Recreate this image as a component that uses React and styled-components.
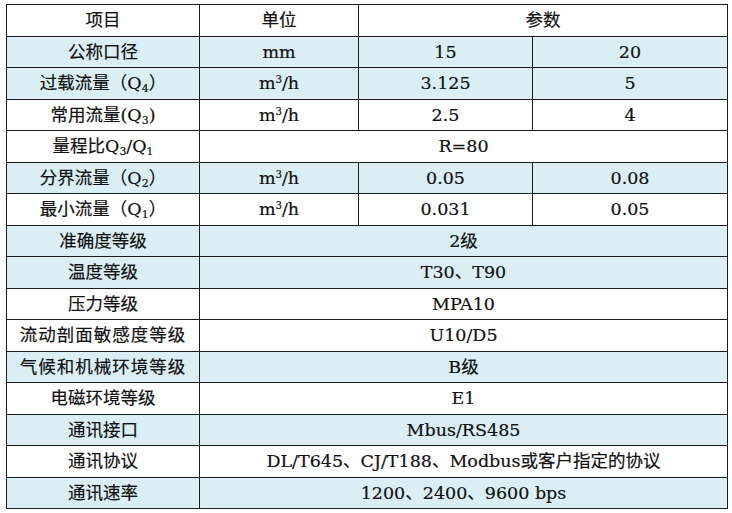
import React from 'react';
import styled, { createGlobalStyle } from 'styled-components';

const GlobalStyle = createGlobalStyle`
    html, body {
        margin: 0;
        padding: 0;
        background: #ffffff;
    }
`;

const Page = styled.div`
    padding: 4px 0 0 6px;
`;

const Table = styled.table`
    width: 721px;
    border-collapse: collapse;
    table-layout: fixed;
`;

const Row = styled.tr`
    height: 31.5px;
    background: ${(p) => (p.$shade ? '#daeef3' : '#ffffff')};
`;

const Cell = styled.td`
    border: 1px solid #1a1a1a;
    padding: 0 2px;
    text-align: center;
    vertical-align: middle;
    font-family: "DejaVu Serif", "Noto Sans CJK SC", serif;
    font-size: 17.5px;
    line-height: 20px;
    color: #111;
    -webkit-text-stroke: 0.2px #111;
    white-space: nowrap;
    letter-spacing: ${(p) => (p.$wide ? '1px' : '0')};
`;

const Sub = styled.sub`
    font-size: 0.62em;
    vertical-align: -0.25em;
    line-height: 0;
`;

const Sup = styled.sup`
    font-size: 0.58em;
    vertical-align: 0.6em;
    line-height: 0;
`;

const Unit = () => (
    <>
        m<Sup>3</Sup>/h
    </>
);

const rows = [
    { shade: true, label: '公称口径', unit: 'mm', values: ['15', '20'] },
    { shade: true, label: <>过载流量（Q<Sub>4</Sub>）</>, unit: <Unit />, values: ['3.125', '5'] },
    { shade: false, label: <>常用流量(Q<Sub>3</Sub>)</>, unit: <Unit />, values: ['2.5', '4'] },
    { shade: false, label: <>量程比Q<Sub>3</Sub>/Q<Sub>1</Sub></>, merged: 'R=80' },
    { shade: true, label: <>分界流量（Q<Sub>2</Sub>）</>, unit: <Unit />, values: ['0.05', '0.08'] },
    { shade: false, label: <>最小流量（Q<Sub>1</Sub>）</>, unit: <Unit />, values: ['0.031', '0.05'] },
    { shade: true, label: '准确度等级', merged: '2级' },
    { shade: true, label: '温度等级', merged: 'T30、T90' },
    { shade: false, label: '压力等级', merged: 'MPA10' },
    { shade: false, label: '流动剖面敏感度等级', wide: true, merged: 'U10/D5' },
    { shade: true, label: '气候和机械环境等级', wide: true, merged: 'B级' },
    { shade: false, label: '电磁环境等级', merged: 'E1' },
    { shade: true, label: '通讯接口', merged: 'Mbus/RS485' },
    { shade: false, label: '通讯协议', merged: 'DL/T645、CJ/T188、Modbus或客户指定的协议' },
    { shade: true, label: '通讯速率', merged: '1200、2400、9600 bps' },
];

export default function App() {
    return (
        <Page>
            <GlobalStyle />
            <Table>
                <colgroup>
                    <col style={{ width: 193 }} />
                    <col style={{ width: 159 }} />
                    <col style={{ width: 174 }} />
                    <col style={{ width: 195 }} />
                </colgroup>
                <tbody>
                    <Row>
                        <Cell>项目</Cell>
                        <Cell>单位</Cell>
                        <Cell colSpan={2}>参数</Cell>
                    </Row>
                    {rows.map((r, i) => (
                        <Row key={i} $shade={r.shade}>
                            <Cell $wide={r.wide}>{r.label}</Cell>
                            {r.merged ? (
                                <Cell colSpan={3}>{r.merged}</Cell>
                            ) : (
                                <>
                                    <Cell>{r.unit}</Cell>
                                    <Cell>{r.values[0]}</Cell>
                                    <Cell>{r.values[1]}</Cell>
                                </>
                            )}
                        </Row>
                    ))}
                </tbody>
            </Table>
        </Page>
    );
}
